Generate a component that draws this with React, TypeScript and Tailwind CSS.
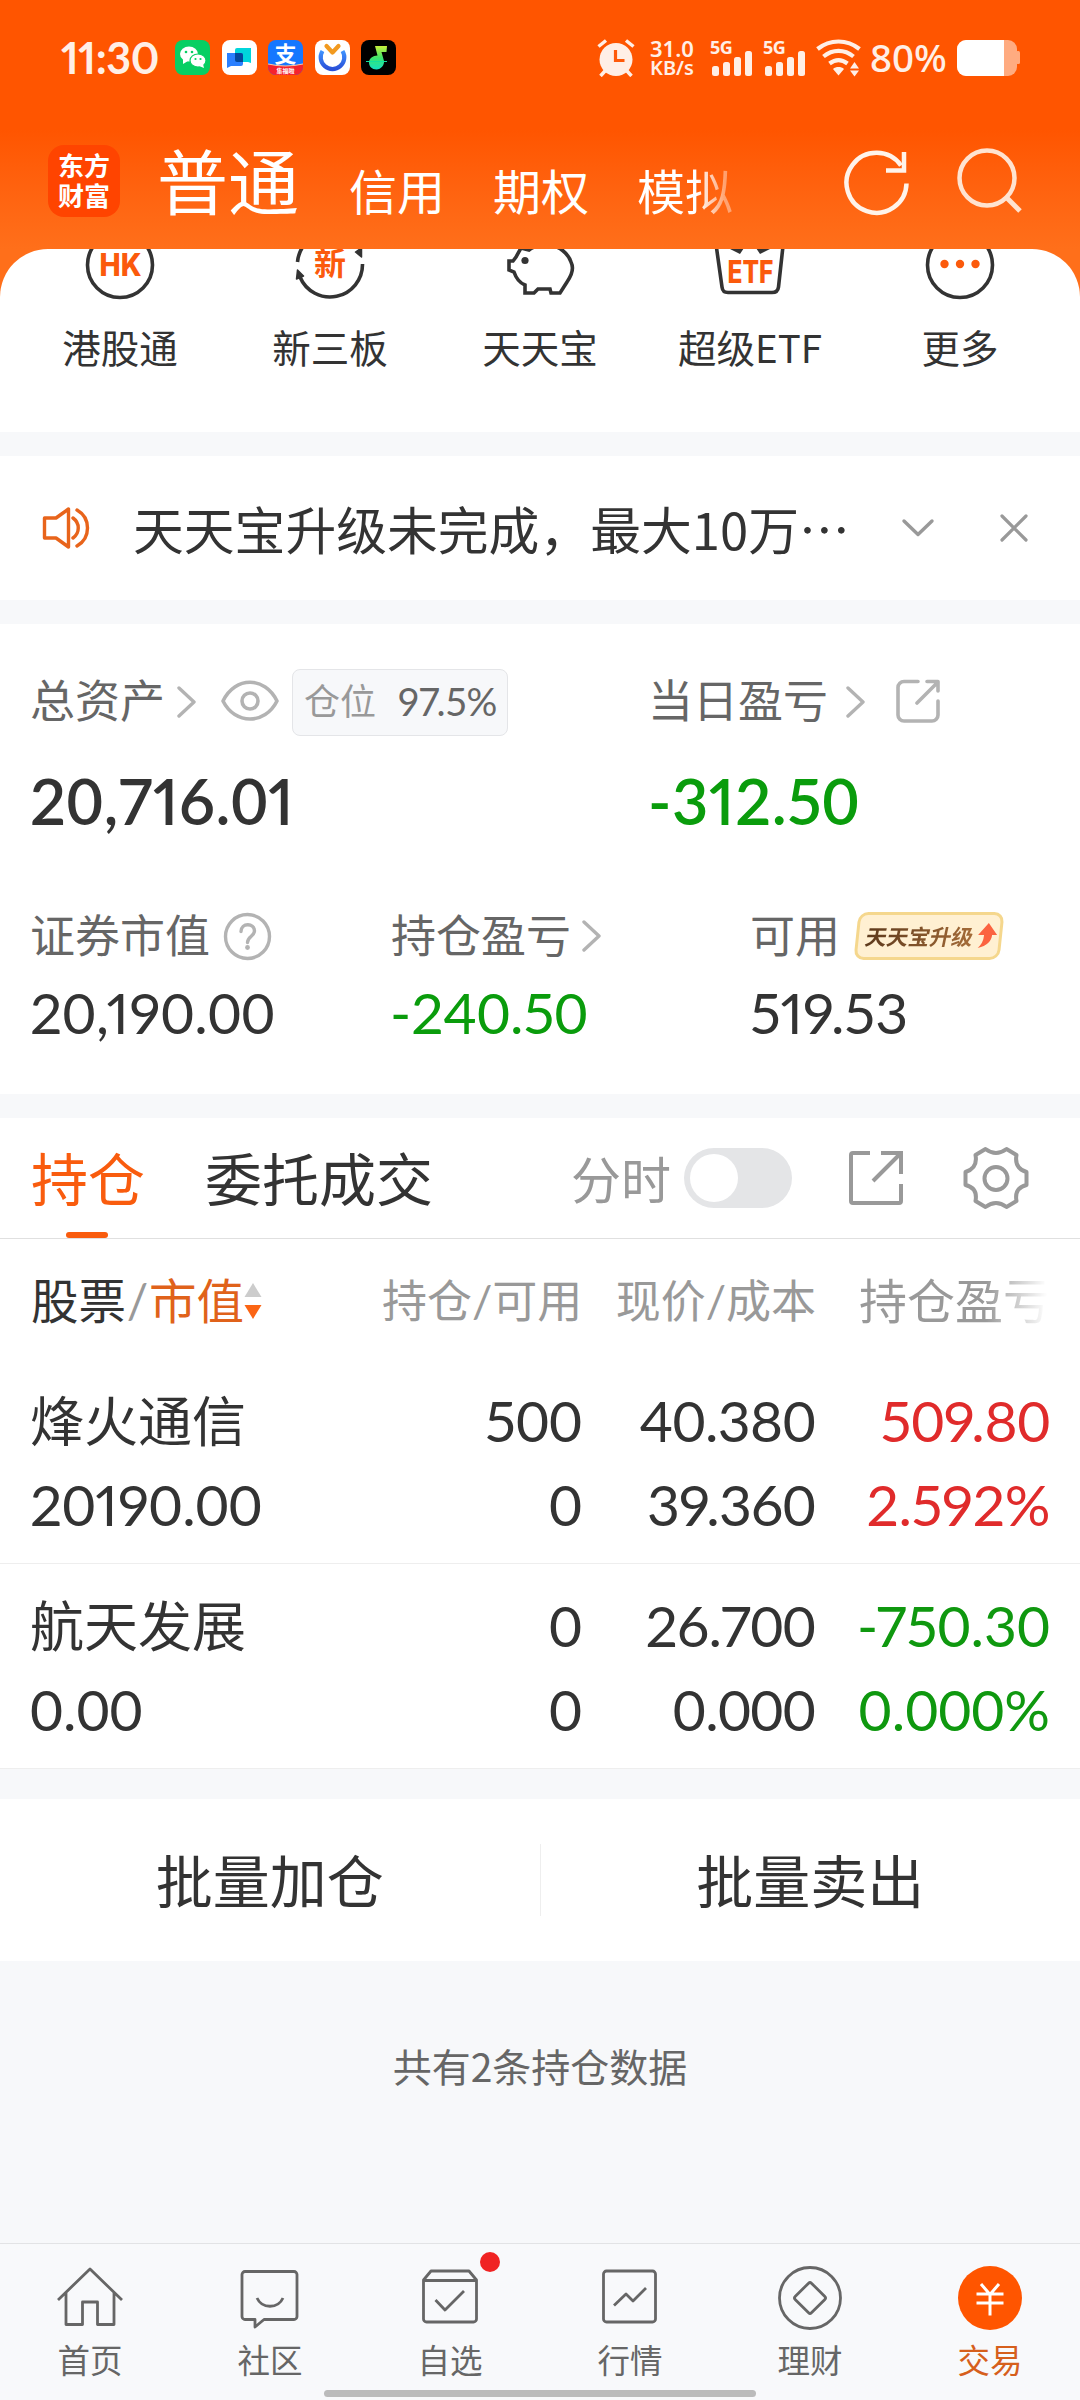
import type { ReactNode } from 'react'

const CJK = "font-['Noto_Sans_CJK_SC',sans-serif]"
const NUM = "font-['Lato','Noto_Sans_CJK_SC',sans-serif] proportional-nums"

const shortcuts = [
  { id: 'hk', label: '港股通' },
  { id: 'neeq', label: '新三板' },
  { id: 'ttb', label: '天天宝' },
  { id: 'etf', label: '超级ETF' },
  { id: 'more', label: '更多' },
]

const holdings = [
  { name: '烽火通信', value: '20190.00', qty: '500', usable: '0', price: '40.380', cost: '39.360', profit: '509.80', rate: '2.592%', up: true },
  { name: '航天发展', value: '0.00', qty: '0', usable: '0', price: '26.700', cost: '0.000', profit: '-750.30', rate: '0.000%', up: false },
]

const navItems = [
  { id: 'home', label: '首页' },
  { id: 'community', label: '社区' },
  { id: 'watch', label: '自选', dot: true },
  { id: 'market', label: '行情' },
  { id: 'wealth', label: '理财' },
  { id: 'trade', label: '交易', active: true },
]

// Lato's proportional zero is too wide, so zeros keep the tabular form
function Num({ value }: { value: string }) {
  return (
    <>
      {value.split(/(0+)/).map((part, i) =>
        part.startsWith('0') ? (
          <span key={i} className="tabular-nums">{part}</span>
        ) : (
          part
        ),
      )}
    </>
  )
}

function Signal() {
  return (
    <div className="flex h-9 w-[42px] flex-col">
      <span className="h-[14px] font-['Noto_Sans',sans-serif] text-[18px] leading-[15px] font-bold tracking-[-0.5px]">5G</span>
      <svg className="-mt-[3px] ml-[2px]" width="40" height="25" viewBox="0 0 40 25" fill="currentColor">
        <rect x="0" y="15" width="7" height="10" rx="2.5" />
        <rect x="11" y="11" width="7" height="14" rx="2.5" />
        <rect x="22" y="6" width="7" height="19" rx="2.5" />
        <rect x="33" y="0" width="7" height="25" rx="2.5" />
      </svg>
    </div>
  )
}

function StatusBar() {
  return (
    <div className="flex h-[115px] items-center pl-[61px] text-[#ffefe6]">
      <span className="w-[114px] font-['Lato',sans-serif] text-[43px] leading-[48px] font-bold tracking-[-0.4px] proportional-nums">11:30</span>
      <div className="flex gap-[11.5px]">
        <svg width="35" height="35" viewBox="0 0 35 35">
          <rect width="35" height="35" rx="8" fill="#07cf63" />
          <ellipse cx="14" cy="14" rx="9" ry="7.5" fill="#fff" />
          <path d="M8 19l0 5 5-3z" fill="#fff" />
          <ellipse cx="23" cy="20.500" rx="8" ry="6.500" fill="#fff" stroke="#07cf63" strokeWidth="1.200" />
          <path d="M24 26l5 2-1-4z" fill="#fff" />
          <g fill="#07cf63">
            <circle cx="11" cy="12" r="1.300" />
            <circle cx="17" cy="12" r="1.300" />
            <circle cx="20.500" cy="19" r="1.100" />
            <circle cx="25.500" cy="19" r="1.100" />
          </g>
        </svg>
        <svg width="35" height="35" viewBox="0 0 35 35">
          <rect width="35" height="35" rx="8" fill="#fff" />
          <path d="M15 8h14v15l-3-1H15a2 2 0 0 1-2-2V10a2 2 0 0 1 2-2z" fill="#00d6dc" />
          <path d="M5 13h14a2 2 0 0 1 2 2v9a2 2 0 0 1-2 2H9l-4 2z" fill="#2a7fff" />
          <path d="M13 13h6a2 2 0 0 1 2 2v7h-6a2 2 0 0 1-2-2z" fill="#04489c" />
        </svg>
        <svg width="35" height="35" viewBox="0 0 35 35">
          <defs>
            <clipPath id="pay">
              <rect width="35" height="35" rx="8" />
            </clipPath>
          </defs>
          <g clipPath="url(#pay)">
            <rect width="35" height="35" fill="#1677ff" />
            <path d="M0 24q17.500 4 35 0v11H0z" fill="#f5222d" />
            <path d="M0 24q17.500 4 35 0" fill="none" stroke="#ffc9a0" strokeWidth="1.200" />
          </g>
          <text x="17.500" y="21.500" textAnchor="middle" fill="#fff" className="font-['Noto_Sans_CJK_SC',sans-serif] text-[22px] font-bold">支</text>
          <text x="17.500" y="33" textAnchor="middle" fill="#fff" className="font-['Noto_Sans_CJK_SC',sans-serif] text-[6px] font-bold">集福啦</text>
        </svg>
        <svg width="35" height="35" viewBox="0 0 35 35">
          <defs>
            <linearGradient id="ring" x1="0" y1="0" x2="0" y2="1">
              <stop offset="0" stopColor="#3f93ff" />
              <stop offset="1" stopColor="#2a50d8" />
            </linearGradient>
          </defs>
          <rect width="35" height="35" rx="8" fill="#fff" />
          <path d="M7.500 11a11.800 11.800 0 1 0 20 0" fill="none" stroke="url(#ring)" strokeWidth="4.200" />
          <path d="M11.500 6l6 6.500 6-6.500" fill="none" stroke="#f29a1f" strokeWidth="4.200" strokeLinejoin="round" strokeLinecap="round" />
        </svg>
        <svg width="35" height="35" viewBox="0 0 35 35">
          <defs>
            <linearGradient id="note" x1="0" y1="0" x2="0" y2="1">
              <stop offset="0" stopColor="#c8f03c" />
              <stop offset="0.500" stopColor="#3fe46a" />
              <stop offset="1" stopColor="#12dfc0" />
            </linearGradient>
          </defs>
          <rect width="35" height="35" rx="8" fill="#000" />
          <path d="M14 6h12l-.500 6h-5l2.500 9c.500 4-3 8.500-7.500 8.500S8 26.500 8 22.500s4-7 8.500-7z" fill="url(#note)" />
          <path d="M5 21.500h21" stroke="#12dfa0" strokeWidth="1" />
        </svg>
      </div>
      <svg className="ml-[201px]" width="38" height="38" viewBox="0 0 38 38" fill="currentColor">
        <circle cx="19" cy="20.500" r="16.500" />
        <path d="M1.500 7.500L9 1.500M36.500 7.500L29 1.500M8 32l-4.500 5M30 32l4.500 5" stroke="currentColor" strokeWidth="3.500" />
        <path d="M18.500 11v10.500h9" fill="none" stroke="#ff5a0a" strokeWidth="3.200" />
      </svg>
      <div className="ml-[15px] w-[60px] font-['Noto_Sans',sans-serif] text-[22px] leading-[20px] font-semibold">
        <div>31.0</div>
        <div className="text-[20px]">KB/s</div>
      </div>
      <Signal />
      <div className="w-[11px]" />
      <Signal />
      <svg className="ml-[11px]" width="46" height="38" viewBox="0 0 46 38" fill="none" stroke="currentColor" strokeWidth="4.200">
        <path d="M1.500 10C14 0 31 0 43.500 10" />
        <path d="M7.500 17.500c9-7.500 21-7.500 30 0" />
        <path d="M13.500 24.500c6-4.500 12-4.500 18 0" />
        <path d="M17 30c3-2.600 8-2.600 11 0l-5.500 6.500z" fill="currentColor" stroke="none" />
        <path d="M34 29.500l4.500-6.500 4.500 6.500zM34 31.500l4.500 6 4.500-6z" fill="currentColor" stroke="none" />
      </svg>
      <span className="-mt-[2px] ml-[8px] w-[87px] font-['Noto_Sans',sans-serif] text-[38.500px] leading-[48px] font-medium">80%</span>
      <svg width="64" height="36" viewBox="0 0 64 36">
        <rect width="60" height="36" rx="9" fill="#ffab80" />
        <rect x="59" y="11" width="4" height="13" rx="1.500" fill="#ffab80" />
        <path d="M9 0h38v36H9a9 9 0 0 1-9-9V9a9 9 0 0 1 9-9z" fill="#fff" />
      </svg>
    </div>
  )
}

function Header() {
  return (
    <div className="flex h-[134px] items-start pl-12 text-white">
      <div className={`${CJK} mt-[30px] flex h-[72px] w-[72px] flex-col items-center justify-center rounded-2xl bg-[#ff4400] text-[26px] leading-[30px] font-bold`}>
        <span className="-mt-[2px]">东方</span>
        <span>财富</span>
      </div>
      <div className={`${CJK} ml-[37px] flex w-[585px] items-start text-[48px] leading-[70px]`}>
        <span className="mt-[10px] mr-[50px] text-[71px] leading-[106px]">普通</span>
        <span className="mt-[39px] mr-[48px]">信用</span>
        <span className="mt-[39px] mr-[48px]">期权</span>
        <span className="mt-[39px] bg-linear-to-r from-white from-62% to-white/40 to-92% bg-clip-text text-transparent">模拟</span>
      </div>
      <svg className="mt-[34px] ml-[101px]" width="68" height="68" viewBox="0 0 68 68" fill="none" stroke="#fff3ea" strokeWidth="4.500">
        <path d="M63.500 34.500A30 30 0 1 1 58 16.500" />
        <path d="M61 3v18.500H43" />
      </svg>
      <svg className="mt-[32px] ml-[46px]" width="68" height="68" viewBox="0 0 68 68" fill="none" stroke="#ffe3d0" strokeWidth="4.500">
        <circle cx="30" cy="31" r="27.500" />
        <path d="M49 50l14 14" strokeWidth="5" />
      </svg>
    </div>
  )
}

function ShortcutIcon({ id }: { id: string }) {
  const drawings: Record<string, ReactNode> = {
    hk: (
      <>
        <circle cx="36" cy="36" r="32.500" />
        <text x="36.500" y="46.500" textAnchor="middle" className="fill-[#fb5a0c] stroke-none font-['Inter',sans-serif] text-[31px] font-extrabold" textLength="42" lengthAdjust="spacingAndGlyphs">HK</text>
      </>
    ),
    neeq: (
      <>
        <path d="M3.500 33A32.500 32.500 0 0 1 60 14M68.500 35A32.500 32.500 0 0 1 6 48" />
        <path d="M2.500 50l1-9 6 6zM67.500 28v-9l-6 4z" fill="#333" strokeWidth="1.500" strokeLinejoin="round" />
        <text x="36" y="46" textAnchor="middle" className="fill-[#fb5a0c] stroke-none font-['Noto_Sans_CJK_SC',sans-serif] text-[32px] font-bold">新</text>
      </>
    ),
    ttb: (
      <>
        <path d="M17 19L12 28l-3 4H5v9l5 2c2 6 6 11 11 13v8h9l4-4h12l1 4h9l7-11c5-7 7-14 4-20-3-9-12-16-22-17-9-1-16 2-20 5z" />
        <circle cx="21" cy="31.500" r="3.600" fill="#333" stroke="none" />
      </>
    ),
    etf: (
      <>
        <path d="M1 8l7 50c.500 4 2 5.500 6 5.500h44c4 0 6-1.500 6.500-5.500L70 8" />
        <path d="M14 19l12 6 4-6zM58 19l-12 6-4-6z" fill="#333" stroke="none" />
        <text x="36.500" y="53.500" textAnchor="middle" className="fill-[#fb5a0c] stroke-none font-['Inter',sans-serif] text-[31px] font-extrabold" textLength="46" lengthAdjust="spacingAndGlyphs">ETF</text>
      </>
    ),
    more: (
      <>
        <circle cx="36" cy="36" r="32.500" />
        <g fill="#fb5a0c" stroke="none">
          <circle cx="20.500" cy="35" r="4.200" />
          <circle cx="36" cy="35" r="4.200" />
          <circle cx="51.500" cy="35" r="4.200" />
        </g>
      </>
    ),
  }
  return (
    <svg className="-mt-5" width="72" height="72" viewBox="0 0 72 72" fill="none" stroke="#333" strokeWidth="3.600">
      {drawings[id]}
    </svg>
  )
}

function Chevron() {
  return (
    <svg width="19" height="32" viewBox="0 0 19 32" fill="none" stroke="#b3b3b3" strokeWidth="3.400" strokeLinecap="round" strokeLinejoin="round">
      <path d="M2 2l15 14L2 30" />
    </svg>
  )
}

function Notice() {
  return (
    <div className="flex h-36 items-center bg-white">
      <svg className="ml-[41px]" width="50" height="44" viewBox="0 0 50 44" fill="none" stroke="#e8641b" strokeWidth="3.400" strokeLinejoin="round" strokeLinecap="round">
        <path d="M3.500 12H15L27.500 3v38L15 32H3.500z" />
        <path d="M32 12c7 5 7 15 0 20M36 4c14 8 14 28 0 36" />
      </svg>
      <span className={`${CJK} -mt-[1px] ml-[42px] w-[768px] text-[50.800px] leading-[72px] whitespace-nowrap text-[#333]`}>天天宝升级未完成，最大10万…</span>
      <svg width="34" height="20" viewBox="0 0 34 20" fill="none" stroke="#999" strokeWidth="3.400" strokeLinecap="round" strokeLinejoin="round">
        <path d="M3 3l14 13.500L31 3" />
      </svg>
      <svg className="ml-[65px]" width="28" height="28" viewBox="0 0 28 28" fill="none" stroke="#999" strokeWidth="3.200" strokeLinecap="round">
        <path d="M2 2l24 24M26 2L2 26" />
      </svg>
    </div>
  )
}

function AccountSummary() {
  return (
    <div className="h-[470px] bg-white pt-[45px] text-[#333]">
      <div className={`${CJK} flex h-[66px] items-center pl-[30px] text-[45px] leading-[60px] text-[#666]`}>
        <span className="-mt-[7px] w-[147px]">总资产</span>
        <Chevron />
        <svg className="-mt-[3px] ml-[25px]" width="58" height="42" viewBox="0 0 58 42" fill="none" stroke="#b3b3b3" strokeWidth="3.600" strokeLinejoin="round">
          <path d="M2 21C14-4 44-4 56 21 44 45 14 45 2 21z" />
          <circle cx="29" cy="21" r="8" />
        </svg>
        <div className="ml-[13px] flex h-[67px] w-[216px] items-center rounded-lg border border-[#e4e5e8] bg-[#f7f8fa] pl-[11px] text-[36px] text-[#999]">
          <span className="-mt-[6px]">仓位</span>
          <span className={`${NUM} -mt-[2px] ml-[22px] text-[38.500px] text-[#666]`}>97.5%</span>
        </div>
        <span className="-mt-[7px] ml-[140px] w-[198px]">当日盈亏</span>
        <Chevron />
        <svg className="-mt-[2px] ml-[31px]" width="44" height="44" viewBox="0 0 44 44" fill="none" stroke="#b3b3b3" strokeWidth="3.600" strokeLinecap="round" strokeLinejoin="round">
          <path d="M22 2.500H8a6 6 0 0 0-6 6V36a6 6 0 0 0 6 6h28a6 6 0 0 0 6-6V22M31 2.500h11V12M42 3L21 24" />
        </svg>
      </div>
      <div className={`${NUM} mt-[30px] flex h-[72px] items-center pl-[30px] text-[63px] leading-[72px] font-semibold tracking-[0.600px]`}>
        <span className="w-[618px]"><Num value="20,716.01" /></span>
        <span className="text-[#0a9c0c]"><Num value="-312.50" /></span>
      </div>
      <div className={`${CJK} mt-[75px] flex h-12 text-[45px] leading-[42px] text-[#666]`}>
        <div className="flex w-[360px] items-center pl-[30px]">
          <span className="-mt-[4px]">证券市值</span>
          <svg className="ml-[13px]" width="49" height="49" viewBox="0 0 49 49" fill="none" stroke="#b3b3b3" strokeWidth="3.400">
            <circle cx="24.500" cy="24.500" r="22" />
            <path d="M18 19.500c0-9 13.500-9 13.500-.500 0 5-7 5.500-7 11.500" strokeLinecap="round" />
            <circle cx="24.500" cy="35.500" r="2.400" fill="#b3b3b3" stroke="none" />
          </svg>
        </div>
        <div className="flex w-[360px] items-center pl-[31px]">
          <span className="-mt-[4px] mr-[11px]">持仓盈亏</span>
          <Chevron />
        </div>
        <div className="flex items-center pl-[30px]">
          <span className="-mt-[4px]">可用</span>
          <div className="relative ml-[16px] flex h-12 w-[146px] -skew-x-6 items-center rounded-[10px] border-[3px] border-[#f5d78d] bg-[#fff0d2] pl-[7px]">
            <span className="-skew-x-6 bg-linear-to-r from-[#5e3a1c] to-[#a56c38] bg-clip-text text-[21.500px] leading-[32px] font-bold text-transparent">天天宝升级</span>
            <svg className="ml-[3px]" width="20" height="26" viewBox="0 0 20 26">
              <path d="M10.500 0L20 12h-5c0 6-4 11-13 13 3-3 5-7 5-13H1z" fill="#fb6340" />
            </svg>
          </div>
        </div>
      </div>
      <div className={`${NUM} mt-[22px] flex h-[60px] text-[57px] leading-[60px]`}>
        <span className="w-[360px] pl-[30px] tracking-[0.300px]"><Num value="20,190.00" /></span>
        <span className="w-[360px] pl-[30px] text-[#0a9c0c]"><Num value="-240.50" /></span>
        <span className="pl-[30px]"><Num value="519.53" /></span>
      </div>
    </div>
  )
}

function TabBar() {
  return (
    <div className={`${CJK} flex h-[121px] items-center border-b border-[#e0e0e0] bg-white pl-[31px] text-[57px] leading-[80px] text-[#333]`}>
      <div className="relative h-[120px] w-[174px] pt-[18px] text-[#f95c0e]">
        持仓
        <span className="absolute bottom-0 left-[35px] h-[6px] w-[42px] rounded-full bg-[#f95c0e]" />
      </div>
      <div className="h-[120px] w-[366px] pt-[18px]">委托成交</div>
      <span className="-mt-[3px] w-[113px] text-[50px] text-[#999]">分时</span>
      <div className="flex h-[60px] w-[108px] items-center rounded-full bg-[#e4e5e7] pl-[6px]">
        <div className="h-12 w-12 rounded-full bg-white" />
      </div>
      <svg className="ml-[55px]" width="58" height="58" viewBox="0 0 58 58" fill="none" stroke="#999" strokeWidth="4">
        <path d="M23 4H6a2 2 0 0 0-2 2v46a2 2 0 0 0 2 2h46a2 2 0 0 0 2-2V35M34 4h20v21M54 4L26 32" />
      </svg>
      <svg className="ml-[55px]" width="72" height="72" viewBox="0 0 72 72" fill="none" stroke="#999" strokeWidth="4" strokeLinejoin="round">
        <path d="M25.500 7q10.500 8 21 0l10 6q-2.500 13 10 17v13q-12.500 3-10 16l-10 6q-10.500-8-21 0l-10-6q2.500-13-10-16V30q12.500-4 10-17z" />
        <circle cx="36" cy="36.500" r="11.500" />
      </svg>
    </div>
  )
}

function Holdings() {
  return (
    <div className="bg-white text-[#333]">
      <div className={`${NUM} flex h-[120px] items-center pt-[4px] pl-[31px] text-[45px] leading-[60px] whitespace-nowrap text-[#999]`}>
        <div className="flex w-[351px] items-center text-[47.500px]">
          <span className="text-[#333]">股票</span>
          <span className="w-[23px] text-center">/</span>
          <span className="text-[#e0621a]">市值</span>
          <svg width="18" height="36" viewBox="0 0 18 36">
            <path d="M9 0l8.500 14H.5z" fill="#ccc" />
            <path d="M9 36l8.500-14H.5z" fill="#fb6514" />
          </svg>
        </div>
        <span className="w-[200px] text-right">持仓/可用</span>
        <span className="w-[234px] text-right">现价/成本</span>
        <span className="ml-[43px] bg-linear-to-r from-[#999] from-66% to-transparent to-98% bg-clip-text text-[48px] text-transparent">持仓盈亏</span>
      </div>
      {holdings.map((row) => (
        <div key={row.name} className="flex h-[205px] border-b border-[#eee] pt-[19px] pr-[30px] pl-[30px] text-[57px] leading-[84px]">
          <div className="w-[351px]">
            <div className={`${CJK} h-[84px] text-[54px] leading-[81px]`}>{row.name}</div>
            <div className={NUM}><Num value={row.value} /></div>
          </div>
          <div className={`${NUM} w-[201px] text-right`}>
            <div><Num value={row.qty} /></div>
            <div><Num value={row.usable} /></div>
          </div>
          <div className={`${NUM} w-[233px] text-right tracking-[-0.700px]`}>
            <div><Num value={row.price} /></div>
            <div><Num value={row.cost} /></div>
          </div>
          <div className={`${NUM} w-[235px] text-right ${row.up ? 'tracking-[-0.400px] text-[#e02b2b]' : 'text-[#0f980f]'}`}>
            <div><Num value={row.profit} /></div>
            <div><Num value={row.rate} /></div>
          </div>
        </div>
      ))}
    </div>
  )
}

function NavIcon({ id }: { id: string }) {
  const drawings: Record<string, ReactNode> = {
    home: <path d="M4 38L36 7l32 31M12 31v31.500h16.500V40h15v22.500H60V31" />,
    community: (
      <>
        <path d="M11 9.500h49a3 3 0 0 1 3 3v42a3 3 0 0 1-3 3H30L21 65v-7.500H11a3 3 0 0 1-3-3v-42a3 3 0 0 1 3-3z" />
        <path d="M23 36c5 11 21 11 26 0" />
      </>
    ),
    watch: <path d="M9.500 18L17 9h38l7.500 9v39a3 3 0 0 1-3 3h-47a3 3 0 0 1-3-3zM9.500 18.500h53M21.500 38L31 48l19-19" />,
    market: (
      <>
        <rect x="9.500" y="9" width="52" height="51" rx="3" />
        <path d="M20 43.500L32 32l7 7 13-13" />
      </>
    ),
    wealth: (
      <>
        <circle cx="36" cy="36" r="30.500" />
        <rect x="24.500" y="24.500" width="23" height="23" rx="2" transform="rotate(45 36 36)" />
      </>
    ),
    trade: (
      <>
        <circle cx="36" cy="36" r="32" fill="#ff5500" stroke="none" />
        <path d="M27 22l9 10.500L45 22M22.500 32h27M22.500 41h27M36 32v21.500" stroke="#fff" strokeWidth="3" />
      </>
    ),
  }
  return (
    <svg width="72" height="72" viewBox="0 0 72 72" fill="none" stroke="#666" strokeWidth="2.800" strokeLinejoin="round">
      {drawings[id]}
    </svg>
  )
}

function BottomNav() {
  return (
    <div className="relative mt-auto h-[157px] border-t border-[#e2e3e5] bg-[#f8f9fb]">
      <div className="flex">
        {navItems.map((item) => (
          <div key={item.id} className={`${CJK} relative flex w-[180px] flex-col items-center pt-[18px] text-[32.500px] leading-[44px] ${item.active ? 'text-[#d65f1c]' : 'text-[#666]'}`}>
            <NavIcon id={item.id} />
            <span className="mt-[3px]">{item.label}</span>
            {item.dot && <span className="absolute top-[8px] left-[120px] h-5 w-5 rounded-full bg-[#f02323]" />}
          </div>
        ))}
      </div>
      <div className="absolute bottom-[3px] left-[324px] h-[7px] w-[432px] rounded-full bg-[#bbb]" />
    </div>
  )
}

export default function App() {
  return (
    <div className="flex h-[2400px] w-[1080px] flex-col overflow-hidden bg-[#f7f8fa]">
      <div className="bg-linear-to-b from-[#ff5500] from-[130px] to-[#ff6f1a] to-[249px]">
        <StatusBar />
        <Header />
        <div className="flex h-[183px] overflow-hidden rounded-t-[48px] bg-white px-[15px]">
          {shortcuts.map((s) => (
            <div key={s.id} className={`${CJK} flex w-[210px] flex-col items-center text-[38.500px] leading-[52px] text-[#333]`}>
              <ShortcutIcon id={s.id} />
              <span className="mt-[19px]">{s.label}</span>
            </div>
          ))}
        </div>
      </div>
      <div className="mt-6">
        <Notice />
      </div>
      <div className="mt-6">
        <AccountSummary />
      </div>
      <div className="mt-6">
        <TabBar />
        <Holdings />
      </div>
      <div className={`${CJK} mt-[30px] flex h-[162px] items-center bg-white text-center text-[57px] leading-[80px] text-[#333]`}>
        <span className="-mt-[4px] flex-1">批量加仓</span>
        <span className="h-[72px] w-px bg-[#eee]" />
        <span className="-mt-[4px] flex-1">批量卖出</span>
      </div>
      <div className={`${CJK} mt-[78px] text-center text-[39px] leading-[52px] text-[#666]`}>共有2条持仓数据</div>
      <BottomNav />
    </div>
  )
}
